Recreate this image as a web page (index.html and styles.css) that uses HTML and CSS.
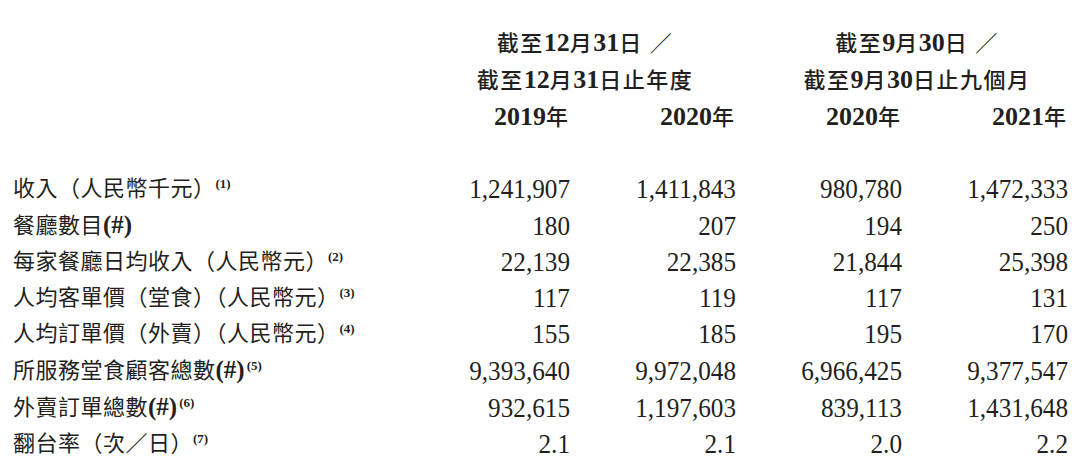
FILE: index.html
```html
<!DOCTYPE html>
<html lang="zh-Hant">
<head>
<meta charset="utf-8">
<link rel="stylesheet" href="styles.css">
</head>
<body>
<table class="kpi">
  <colgroup>
    <col class="c-label"><col class="c-num"><col class="c-num"><col class="c-num"><col class="c-num">
  </colgroup>
  <thead>
    <tr>
      <th></th>
      <th colspan="2" class="grp">截至<b>12</b>月<b>31</b>日 ／</th>
      <th colspan="2" class="grp">截至<b>9</b>月<b>30</b>日 ／</th>
    </tr>
    <tr>
      <th></th>
      <th colspan="2" class="grp">截至<b>12</b>月<b>31</b>日止年度</th>
      <th colspan="2" class="grp">截至<b>9</b>月<b>30</b>日止九個月</th>
    </tr>
    <tr class="years">
      <th></th>
      <th class="yr"><b>2019</b>年</th>
      <th class="yr"><b>2020</b>年</th>
      <th class="yr"><b>2020</b>年</th>
      <th class="yr"><b>2021</b>年</th>
    </tr>
  </thead>
  <tbody>
    <tr class="first">
      <td class="lbl">收入（人民幣千元）<sup>(1)</sup></td>
      <td class="num"><span>1,241,907</span></td><td class="num"><span>1,411,843</span></td><td class="num"><span>980,780</span></td><td class="num"><span>1,472,333</span></td>
    </tr>
    <tr>
      <td class="lbl">餐廳數目<b class="hash">(#)</b></td>
      <td class="num"><span>180</span></td><td class="num"><span>207</span></td><td class="num"><span>194</span></td><td class="num"><span>250</span></td>
    </tr>
    <tr>
      <td class="lbl">每家餐廳日均收入（人民幣元）<sup>(2)</sup></td>
      <td class="num"><span>22,139</span></td><td class="num"><span>22,385</span></td><td class="num"><span>21,844</span></td><td class="num"><span>25,398</span></td>
    </tr>
    <tr>
      <td class="lbl">人均客單價（堂食）（人民幣元）<sup>(3)</sup></td>
      <td class="num"><span>117</span></td><td class="num"><span>119</span></td><td class="num"><span>117</span></td><td class="num"><span>131</span></td>
    </tr>
    <tr>
      <td class="lbl">人均訂單價（外賣）（人民幣元）<sup>(4)</sup></td>
      <td class="num"><span>155</span></td><td class="num"><span>185</span></td><td class="num"><span>195</span></td><td class="num"><span>170</span></td>
    </tr>
    <tr>
      <td class="lbl">所服務堂食顧客總數<b class="hash">(#)</b><sup class="tight">(5)</sup></td>
      <td class="num"><span>9,393,640</span></td><td class="num"><span>9,972,048</span></td><td class="num"><span>6,966,425</span></td><td class="num"><span>9,377,547</span></td>
    </tr>
    <tr>
      <td class="lbl">外賣訂單總數<b class="hash">(#)</b><sup class="tight">(6)</sup></td>
      <td class="num"><span>932,615</span></td><td class="num"><span>1,197,603</span></td><td class="num"><span>839,113</span></td><td class="num"><span>1,431,648</span></td>
    </tr>
    <tr>
      <td class="lbl">翻台率（次／日）<sup>(7)</sup></td>
      <td class="num"><span>2.1</span></td><td class="num"><span>2.1</span></td><td class="num"><span>2.0</span></td><td class="num"><span>2.2</span></td>
    </tr>
  </tbody>
</table>
</body>
</html>
```

FILE: styles.css
```css
html, body {
  margin: 0;
  padding: 0;
  background: #ffffff;
}
body {
  color: #231f20;
  font-family: "Liberation Serif", "Noto Sans CJK TC", serif;
  padding-top: 25px;
}
.kpi {
  margin-left: 13px;
  width: 1055px;
  table-layout: fixed;
  border-collapse: collapse;
  border-spacing: 0;
}
.c-label { width: 391px; }
.c-num { width: 166px; }
.kpi th, .kpi td {
  padding: 0;
  height: 36px;
  line-height: 36px;
  white-space: nowrap;
  vertical-align: middle;
}
.kpi th {
  font-size: 22px;
  font-weight: 500;
  letter-spacing: 1.5px;
}
.kpi th b {
  font-family: "Liberation Serif", serif;
  font-weight: 700;
  font-size: 26px;
  letter-spacing: 0;
}
.grp {
  text-align: center;
  padding-left: 30px !important;
}
.yr {
  text-align: right;
  padding-right: 2px !important;
  letter-spacing: 0 !important;
}
.kpi tbody tr.first td {
  padding-top: 35px;
}
.lbl {
  text-align: left;
  font-size: 22px;
  letter-spacing: 0.5px;
}
.hash {
  font-family: "Liberation Serif", serif;
  font-weight: 700;
  font-size: 25px;
  letter-spacing: 0;
}
.lbl sup {
  font-family: "Liberation Serif", serif;
  font-weight: 700;
  font-size: 13px;
  letter-spacing: 0;
  vertical-align: 8px;
  line-height: 0;
  margin-left: 0;
}
.lbl sup.tight {
  margin-left: 2px;
}
.num {
  text-align: right;
  font-size: 28px;
}
.num span {
  display: inline-block;
  transform: scaleX(0.9);
  transform-origin: right center;
}
```
